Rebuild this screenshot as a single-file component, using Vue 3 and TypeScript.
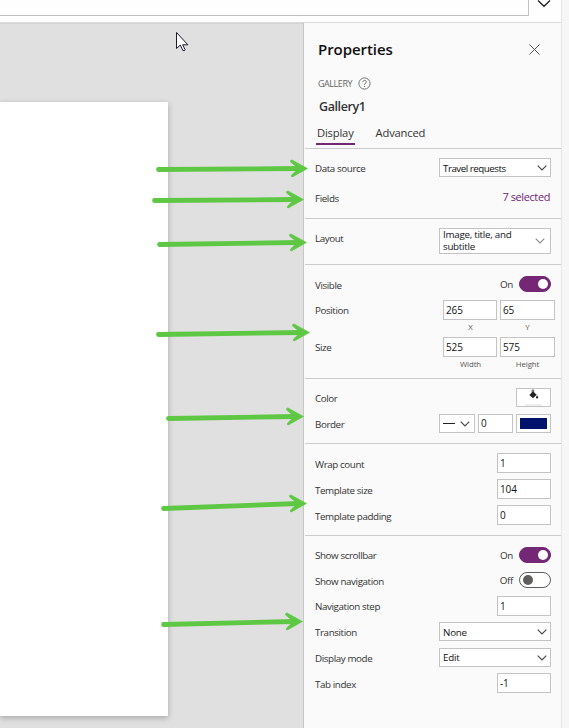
<script setup lang="ts">
import { reactive, ref } from 'vue'

interface Arrow { x1: number; y1: number; x2: number; y2: number }

const tab = ref<'Display' | 'Advanced'>('Display')
const form = reactive({
  x: '265', y: '65', width: '525', height: '575', border: '0',
  wrap: '1', size: '104', padding: '0', step: '1', tabIndex: '-1',
  visible: true, scrollbar: true, navigation: false,
})

const arrows: Arrow[] = [
  { x1: 158.5, y1: 169.5, x2: 307.5, y2: 168.5 },
  { x1: 154.5, y1: 200.5, x2: 303.5, y2: 199.5 },
  { x1: 159.5, y1: 244.5, x2: 306.5, y2: 242.5 },
  { x1: 158.5, y1: 334.5, x2: 309.5, y2: 332.5 },
  { x1: 168.5, y1: 418.5, x2: 303.5, y2: 416.5 },
  { x1: 163.5, y1: 508.5, x2: 306.5, y2: 503.5 },
  { x1: 163.5, y1: 624.5, x2: 302.5, y2: 621.5 },
]

const shaft = (a: Arrow) => `M${a.x1} ${a.y1}L${a.x2 - 8} ${a.y2}`
const head = (a: Arrow) =>
  `M${a.x2} ${a.y2}L${a.x2 - 15.5} ${a.y2 - 8.6}Q${a.x2 - 17.6} ${a.y2 - 8.6} ${a.x2 - 17} ${a.y2 - 6.6}` +
  `L${a.x2 - 9} ${a.y2}L${a.x2 - 16} ${a.y2 + 6.6}Q${a.x2 - 17} ${a.y2 + 9} ${a.x2 - 14.6} ${a.y2 + 8.2}Z`
</script>

<template>
  <div class="app">
    <header class="bar">
      <div class="formula"></div>
      <svg class="expand" width="14" height="8" viewBox="0 0 14 8"><path d="M1 .5 7 6.3 13 .5" /></svg>
    </header>
    <div class="body">
      <main class="canvas"><div class="sheet"></div></main>
      <aside class="panel">
        <div class="head">
          <h1>Properties</h1>
          <svg width="11" height="11" viewBox="0 0 11 11"><path d="M.5.5l10 10M10.5.5l-10 10" /></svg>
        </div>
        <div class="kind">
          <span>GALLERY</span>
          <svg width="13" height="13" viewBox="0 0 13 13">
            <circle cx="6.5" cy="6.5" r="5.6" />
            <path d="M4.8 5.1C4.8 2.8 8.4 2.9 8.3 5 8.2 6.2 6.5 6.3 6.5 7.9M6.5 9v1" />
          </svg>
        </div>
        <h2>Gallery1</h2>
        <nav class="tabs">
          <button :class="{ active: tab === 'Display' }" @click="tab = 'Display'"><span>Display</span></button>
          <button :class="{ active: tab === 'Advanced' }" @click="tab = 'Advanced'"><span>Advanced</span></button>
        </nav>

        <section class="source">
          <div class="row">
            <label>Data source</label>
            <div class="select"><span class="travel">Travel requests</span><svg class="chev" viewBox="0 0 10 6"><path d="M.7.7 5 5 9.3.7" /></svg></div>
          </div>
          <div class="row"><label>Fields</label><a class="link">7 selected</a></div>
        </section>

        <section class="layout">
          <div class="row">
            <label>Layout</label>
            <div class="select tall"><span>Image, title, and<br />subtitle</span><svg class="chev" viewBox="0 0 10 6"><path d="M.7.7 5 5 9.3.7" /></svg></div>
          </div>
        </section>

        <section class="geometry">
          <div class="row switch-row">
            <label>Visible</label>
            <span class="state">On</span>
            <button class="toggle" :class="{ on: form.visible }" @click="form.visible = !form.visible"><i></i></button>
          </div>
          <div class="row pair">
            <label>Position</label>
            <input v-model="form.x" /><input v-model="form.y" />
          </div>
          <div class="captions"><span>X</span><span>Y</span></div>
          <div class="row pair">
            <label>Size</label>
            <input v-model="form.width" /><input v-model="form.height" />
          </div>
          <div class="captions"><span>Width</span><span>Height</span></div>
        </section>

        <section class="style">
          <div class="row">
            <label>Color</label>
            <div class="swatch fill">
              <svg width="12" height="12" viewBox="0 0 12 12">
                <path class="ink" d="M5 2.5 8.7 5.8 5 9.2 1.3 5.9ZM9.1 6.2q2.3 3.3 0 3.3t0-3.3Z" />
                <path class="handle" d="M4.2 4V1.2q.9-1 1.5 0v3.6" />
              </svg>
              <em></em>
            </div>
          </div>
          <div class="row border-row">
            <label>Border</label>
            <div class="select line"><i></i><svg class="chev" viewBox="0 0 10 6"><path d="M.7.7 5 5 9.3.7" /></svg></div>
            <input v-model="form.border" class="thin" />
            <div class="swatch"><b></b></div>
          </div>
        </section>

        <section class="template">
          <div class="row"><label>Wrap count</label><input v-model="form.wrap" /></div>
          <div class="row"><label>Template size</label><input v-model="form.size" /></div>
          <div class="row"><label>Template padding</label><input v-model="form.padding" /></div>
        </section>

        <section class="behavior">
          <div class="row switch-row">
            <label>Show scrollbar</label>
            <span class="state">On</span>
            <button class="toggle" :class="{ on: form.scrollbar }" @click="form.scrollbar = !form.scrollbar"><i></i></button>
          </div>
          <div class="row switch-row">
            <label>Show navigation</label>
            <span class="state">Off</span>
            <button class="toggle" :class="{ on: form.navigation }" @click="form.navigation = !form.navigation"><i></i></button>
          </div>
          <div class="row"><label>Navigation step</label><input v-model="form.step" /></div>
          <div class="row">
            <label>Transition</label>
            <div class="select"><span>None</span><svg class="chev" viewBox="0 0 10 6"><path d="M.7.7 5 5 9.3.7" /></svg></div>
          </div>
          <div class="row">
            <label>Display mode</label>
            <div class="select"><span>Edit</span><svg class="chev" viewBox="0 0 10 6"><path d="M.7.7 5 5 9.3.7" /></svg></div>
          </div>
          <div class="row"><label>Tab index</label><input v-model="form.tabIndex" /></div>
        </section>
      </aside>
      <div class="gutter"></div>
    </div>

    <svg class="overlay" width="569" height="728" viewBox="0 0 569 728">
      <g v-for="(a, i) in arrows" :key="i">
        <path class="shaft" :d="shaft(a)" />
        <path class="tip" :d="head(a)" />
      </g>
      <path class="cursor" d="M176.5 32.5v16l3.8-3.5 2.6 5.5q1.2.8 2.3-.7l-2.6-5h5.3Z" />
    </svg>
  </div>
</template>

<style>
body { margin: 0; overflow: hidden; }
</style>

<style scoped>
* { box-sizing: border-box; }
.app { position: relative; width: 569px; height: 728px; display: flex; flex-direction: column; overflow: hidden; background: #fff; font-family: "Open Sans", "Noto Sans", sans-serif; font-size: 9.8px; color: #333; }
.bar { flex: none; display: flex; height: 22px; width: 561px; background: #fefefe; }
.formula { width: 529px; height: 16px; border: solid #c2c2c0; border-width: 0 1px 1px 0; }
.expand { margin: 0 0 0 8px; fill: none; stroke: #222; stroke-width: 1.3; }
.body { flex: 1; min-height: 0; display: flex; border-top: 1px solid #dadada; }
.canvas { width: 303px; padding-top: 79px; background: #e0e0e0; overflow: hidden; box-shadow: inset 0 1px 0 #d3d3d3; }
.sheet { width: 168px; height: 614px; background: #fff; box-shadow: 0 2px 6px rgba(0, 0, 0, .25); }
.panel { width: 258px; padding-left: 1px; border-left: 1px solid #c6c6c6; background: #fafafa; display: flex; flex-direction: column; }
.gutter { flex: 1; background: #f6f6f6; margin-top: -23px; border-left: 1px solid #e6e6e6; }

.head { height: 53px; padding: 0 21px 2px 13px; display: flex; align-items: center; justify-content: space-between; }
.head svg { stroke: #555; stroke-width: 1; margin-top: 1px; }
h1, h2 { margin: 0; font-weight: 600; }
h1 { font-size: 15px; color: #111; letter-spacing: -.06px; }
.kind { height: 14px; padding-left: 13px; display: flex; align-items: center; gap: 6px; font-size: 9px; letter-spacing: -.45px; color: #666; }
.kind svg { fill: none; stroke: #666; stroke-width: .9; }
h2 { height: 32px; line-height: 34px; padding-left: 14px; font-size: 12.5px; letter-spacing: -.4px; }
.tabs { height: 27px; display: flex; gap: 20px; padding-left: 11px; border-bottom: 1px solid #ccc; }
.tabs button { height: 23px; padding: 0 1px; border: 0; border-bottom: 2px solid transparent; background: none; font: 11.2px/20px "Open Sans", sans-serif; letter-spacing: -.17px; color: #333; }
.tabs .active { border-color: #742774; }

section { flex: none; border-bottom: 1px solid #ccc; padding: 9px 10px 0 10px; display: flex; flex-direction: column; }
.source { height: 70px; gap: 11px; }
.layout { height: 46px; }
.geometry { height: 114px; padding-top: 11px; }
.style { height: 65px; gap: 7px; }
.template { height: 92px; gap: 6px; }
.behavior { border: 0; padding-top: 11px; }
.row { flex: none; display: flex; align-items: center; height: 19px; gap: 3px; }
label { margin-right: auto; position: relative; top: 1px; letter-spacing: -.4px; white-space: nowrap; }
input { width: 54px; height: 20px; margin: 0; padding: 0 0 1px 2px; border: 1px solid #c4c4c4; border-radius: 0; background: #fff; font: 10px "Open Sans", sans-serif; letter-spacing: -.1px; color: #111; outline: 0; }
input.thin { width: 35px; height: 19px; }
.select { width: 112px; height: 19px; padding: 0 3px; border: 1px solid #c4c4c4; background: #fff; display: flex; align-items: center; justify-content: space-between; color: #111; letter-spacing: -.25px; white-space: nowrap; }
.select > span { position: relative; top: .5px; }
.select > .travel { letter-spacing: -.5px; }
.chev { width: 10px; height: 6px; fill: none; stroke: #444; stroke-width: 1.1; overflow: visible; }
.link { color: #742774; font-size: 11px; letter-spacing: -.4px; margin: -2px 1px 0 0; }
.layout .row { height: 26px; }
.layout label { top: -3px; }
.tall { height: 26px; line-height: 12px; padding: 2px 5px 0 3px; color: #112; letter-spacing: -.28px; }
.tall > span { top: -1px; }
.tall .chev { stroke: #888; margin-top: -2px; }
.switch-row { height: 16px; }
.state { margin-right: 3px; letter-spacing: -.3px; }
.toggle { width: 32px; height: 16px; padding: 0 0 0 3px; border: 1px solid #605e5c; border-radius: 8px; background: #fff; display: flex; align-items: center; }
.toggle i { width: 10px; height: 10px; border-radius: 50%; background: #605e5c; }
.toggle.on { background: #742774; border-color: #742774; padding-left: 18px; }
.toggle.on i { background: #fff; }
.pair { height: 20px; margin-right: -4px; }
.pair label { top: 0; }
.pair input + input { width: 55px; }
.switch-row + .pair { margin-top: 8px; }
.captions { flex: none; height: 17px; margin-right: -4px; display: flex; justify-content: flex-end; gap: 2px; font-size: 7.8px; line-height: 15px; color: #555; }
.captions span { width: 55px; text-align: center; letter-spacing: -.1px; }
.swatch { width: 35px; height: 19px; padding: 3px; border: 1px solid #c4c4c4; background: #fff; display: flex; justify-content: center; }
.fill { flex-direction: column; align-items: center; padding: 0; }
.swatch svg { flex: none; }
.fill em { width: 17px; height: 2px; margin-top: 3px; background: #efefef; }
.swatch b { width: 27px; height: 11px; background: #00126b; }
.ink { fill: #222; }
.handle { fill: none; stroke: #222; stroke-width: .8; }
.line { width: 36px; padding-right: 4px; }
.line i { width: 12px; height: 1px; background: #222; }
.template .row { height: 20px; }
.behavior .row:nth-child(1) label { top: 0; }
.behavior .row:nth-child(2) { margin-top: 9px; }
.behavior .row:nth-child(3) { margin-top: 8px; height: 20px; }
.behavior .row:nth-child(3) label { top: 0; }
.behavior .row:nth-child(4) { margin-top: 6px; }
.behavior .row:nth-child(5) { margin-top: 7px; }
.behavior .row:nth-child(5) .select > span { top: -.5px; }
.behavior .row:nth-child(6) { margin-top: 6px; height: 20px; }
.overlay { position: absolute; left: 0; top: 0; pointer-events: none; }
.shaft { fill: none; stroke: #5ec744; stroke-width: 4.8; stroke-linecap: round; }
.tip { fill: #5ec744; stroke: #5ec744; stroke-width: .6; stroke-linejoin: round; }
.cursor { fill: #fff; stroke: #1b1b2b; stroke-width: 1; }
</style>
